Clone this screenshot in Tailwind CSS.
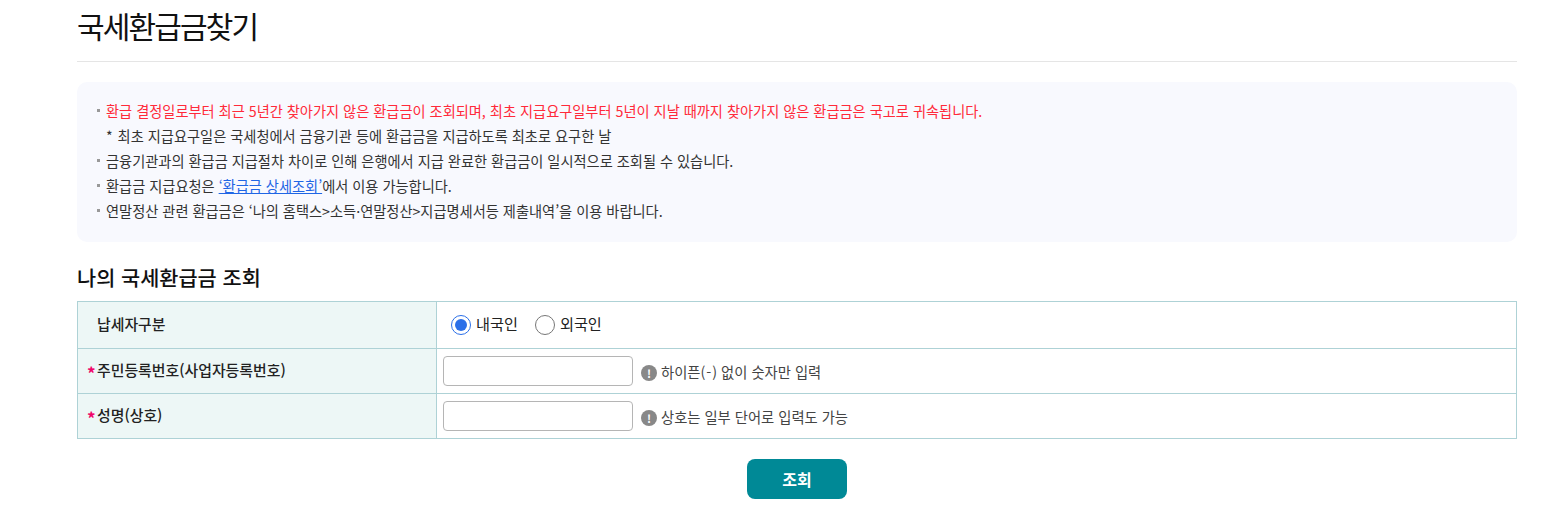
<!DOCTYPE html>
<html lang="ko">
<head>
    <meta charset="UTF-8">
    <title>국세환급금찾기</title>
    <script src="https://cdn.jsdelivr.net/npm/@tailwindcss/browser@4"></script>
</head>
<body class="bg-white text-[#222] font-['Noto_Sans_CJK_KR','Noto_Sans',sans-serif] overflow-hidden">
    <main class="w-[1440px] ml-[77px]">
        <!-- Title -->
        <div class="h-[62px] border-b border-[#e5e5e5]">
            <h1 class="text-[30px] leading-[50px] font-normal tracking-[-1.85px] text-[#111]">국세환급금찾기</h1>
        </div>

        <!-- Notice box -->
        <ul class="mt-5 h-[160px] rounded-[10px] bg-[#f8f9fe] pl-[20px] pt-[16px] text-[14.23px] leading-[25px] text-[#333]">
            <li class="flex items-center"><span class="mr-[6px] size-[3px] bg-[#999]"></span><span class="text-[#ff2a3a]">환급 결정일로부터 최근 5년간 찾아가지 않은 환급금이 조회되며, 최초 지급요구일부터 5년이 지날 때까지 찾아가지 않은 환급금은 국고로 귀속됩니다.</span></li>
            <li class="pl-[9px]"><span class="mr-[1px]">*</span> 최초 지급요구일은 국세청에서 금융기관 등에 환급금을 지급하도록 최초로 요구한 날</li>
            <li class="flex items-center"><span class="mr-[6px] size-[3px] bg-[#999]"></span><span>금융기관과의 환급금 지급절차 차이로 인해 은행에서 지급 완료한 환급금이 일시적으로 조회될 수 있습니다.</span></li>
            <li class="flex items-center"><span class="mr-[6px] size-[3px] bg-[#999]"></span><span>환급금 지급요청은 <a href="#" class="text-[#1f66e5] underline">‘환급금 상세조회’</a>에서 이용 가능합니다.</span></li>
            <li class="flex items-center"><span class="mr-[6px] size-[3px] bg-[#999]"></span><span>연말정산 관련 환급금은 ‘나의 홈택스&gt;소득·연말정산&gt;지급명세서등 제출내역’을 이용 바랍니다.</span></li>
        </ul>

        <!-- Search form -->
        <h2 class="mt-[20px] text-[20.8px] leading-[30px] font-medium text-[#111]">나의 국세환급금 조회</h2>
        <div class="mt-[9px] border border-[#aed2d6] text-[14.9px]">
            <div class="flex h-[47px] border-b border-[#aed2d6]">
                <div class="flex w-[359px] shrink-0 items-center border-r border-[#aed2d6] bg-[#edf7f6] pb-[2px] pl-[19px] font-medium">납세자구분</div>
                <div class="flex items-center pl-[14px]">
                    <label class="flex items-center gap-[5px]">
                        <span class="flex size-[20px] items-center justify-center rounded-full border border-[#2b6fe8]"><span class="size-[12px] rounded-full bg-[#2b6fe8]"></span></span>
                        <span class="pb-[3px] text-[15.2px]">내국인</span>
                    </label>
                    <label class="ml-[17px] flex items-center gap-[5px]">
                        <span class="size-[20px] rounded-full border border-[#777]"></span>
                        <span class="pb-[3px] text-[15.2px]">외국인</span>
                    </label>
                </div>
            </div>
            <div class="flex h-[45px] border-b border-[#aed2d6]">
                <div class="flex w-[359px] shrink-0 items-center border-r border-[#aed2d6] bg-[#edf7f6] pb-[2px] pl-[9px] font-medium"><span class="w-[10px] translate-y-[3px] text-[17px] font-bold text-[#f0056a]">*</span>주민등록번호(사업자등록번호)</div>
                <div class="flex items-center pl-[6px]">
                    <input type="text" class="h-[30px] w-[190px] rounded-[4px] border border-[#b5b5b5] bg-white">
                    <div class="ml-[8px] mt-[4px] flex items-center gap-[4px] text-[14.3px] text-[#444]">
                        <span class="flex size-[16px] items-center justify-center rounded-full bg-[#888] text-[11px] font-bold text-white">!</span>
                        <span class="-translate-y-[1px]">하이픈(<span class="px-[1px]">-</span>) 없이 숫자만 입력</span>
                    </div>
                </div>
            </div>
            <div class="flex h-[44px]">
                <div class="flex w-[359px] shrink-0 items-center border-r border-[#aed2d6] bg-[#edf7f6] pb-[2px] pl-[9px] font-medium"><span class="w-[10px] translate-y-[3px] text-[17px] font-bold text-[#f0056a]">*</span>성명(상호)</div>
                <div class="flex items-center pl-[6px]">
                    <input type="text" class="h-[30px] w-[190px] rounded-[4px] border border-[#b5b5b5] bg-white">
                    <div class="ml-[8px] mt-[4px] flex items-center gap-[4px] text-[14.3px] text-[#444]">
                        <span class="flex size-[16px] items-center justify-center rounded-full bg-[#888] text-[11px] font-bold text-white">!</span>
                        <span class="-translate-y-[1px]">상호는 일부 단어로 입력도 가능</span>
                    </div>
                </div>
            </div>
        </div>

        <div class="mt-5 flex justify-center">
            <button class="h-10 w-[100px] rounded-[8px] bg-[#008996] text-[16px] font-semibold text-white">조회</button>
        </div>
    </main>
</body>
</html>
